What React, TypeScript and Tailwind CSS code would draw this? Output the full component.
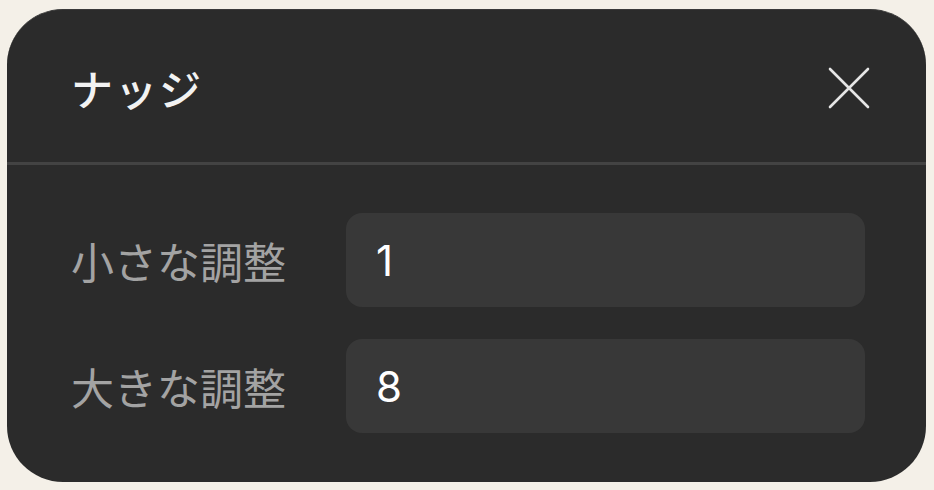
export default function App() {
  const rows = [
    { label: '小さな調整', value: '1' },
    { label: '大きな調整', value: '8' },
  ];

  return (
    <div className="w-[934px] h-[490px] bg-[#f4f0e8] pt-[9px] pl-[7px] font-['Inter','Noto_Sans_CJK_JP',sans-serif]">
      <div className="w-[919px] h-[473px] rounded-[56px] bg-[#2b2b2b] border-t border-[#3a3a3a] flex flex-col overflow-hidden">
        <div className="h-[152px] flex items-center justify-between pl-[64px] pr-[55px] pt-[4px]">
          <h2 className="text-[42px] leading-none font-medium text-[#f2f2f2] tracking-[2px] font-['Noto_Sans_CJK_JP',sans-serif]">ナッジ</h2>
          <button className="w-[44px] h-[44px] flex items-center justify-center text-[#e6e6e6]">
            <svg width="44" height="44" viewBox="0 0 44 44" fill="none" stroke="currentColor" strokeWidth="2.6" strokeLinecap="round">
              <path d="M3 3L41 41M41 3L3 41" />
            </svg>
          </button>
        </div>
        <div className="h-[3px] bg-[#434343]" />
        <div className="flex flex-col gap-[32px] pt-[48px] pl-[64px] pr-[61px]">
          {rows.map(r => (
            <div key={r.label} className="flex items-center">
              <span className="w-[275px] text-[43px] leading-none text-[#a3a3a3] font-['Noto_Sans_CJK_JP',sans-serif]">{r.label}</span>
              <div className="flex-1 h-[94px] rounded-[16px] bg-[#383838] flex items-center pl-[30px] text-[42px] text-white">
                {r.value}
              </div>
            </div>
          ))}
        </div>
      </div>
    </div>
  );
}
